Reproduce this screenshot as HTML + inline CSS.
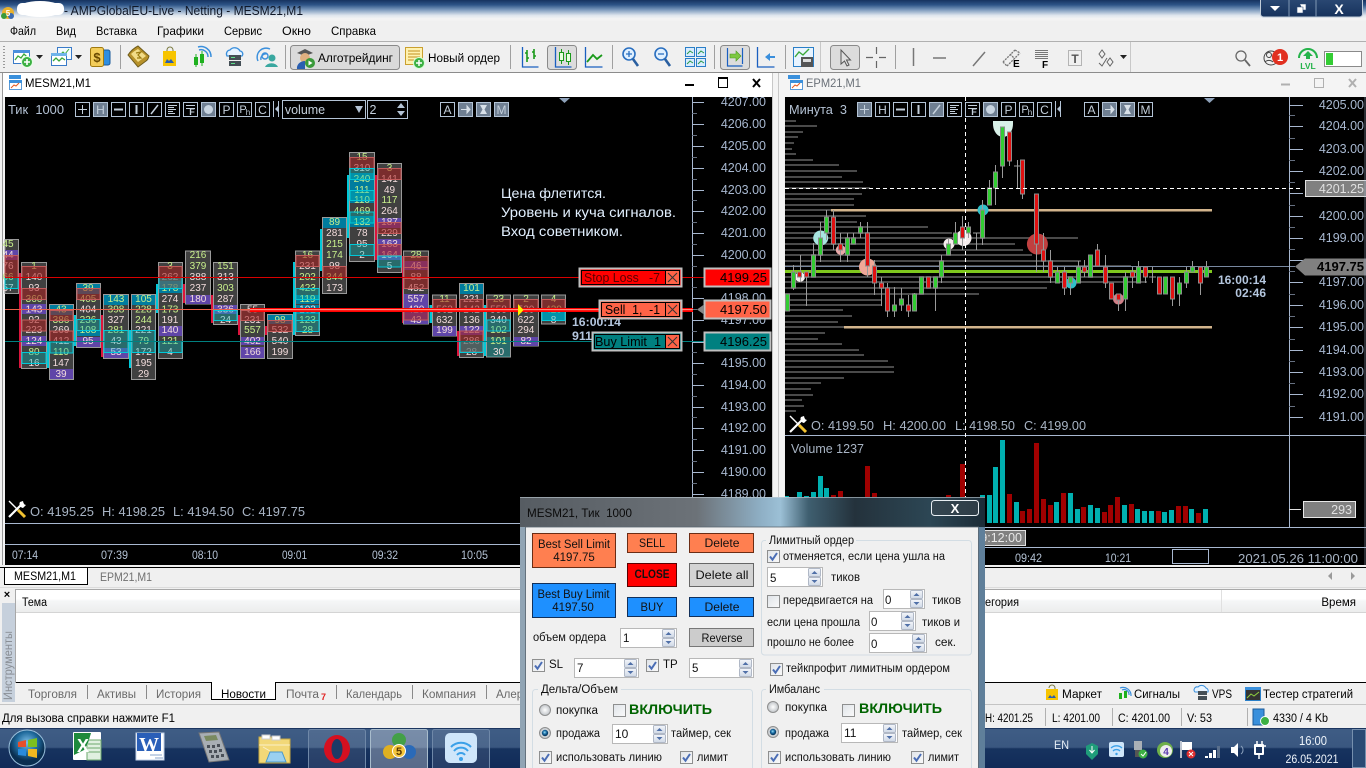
<!DOCTYPE html>
<html lang="ru"><head><meta charset="utf-8"><title>MESM21,M1</title>
<style>
html,body{margin:0;padding:0;width:1366px;height:768px;overflow:hidden;background:#f0f0f0}
svg{display:block}
text{font-family:"Liberation Sans","Noto Sans CJK SC",sans-serif;font-size:12px;fill:#000;white-space:pre}
.ax text{fill:#a8b8d0;font-size:12.5px;text-anchor:end}
.tm text{fill:#b4c2d4;font-size:12px}
.inf text{fill:#a8b4c4;font-size:13px}
.fp text{font-size:10px;fill:#f2dcdc;text-anchor:middle}
.fp text.g{fill:#c8f08c}
.fb{fill:#404040;stroke:#9a9a9a;stroke-width:1}
.tl{fill:#007c9e}.pu{fill:#5f45a8}
.rd{fill:rgba(170,30,30,.55);stroke:#c25a5a;stroke-width:1}
.cy{fill:rgba(0,190,190,.35);stroke:#00c8d8;stroke-width:1}
.bc{fill:#00c8d8}.br{fill:#dc143c}
.bt rect{fill:none;stroke:#b4c4d6}
.bt rect.on{fill:#6f7f92}
.bt text{fill:#c4d0dc;font-size:12px;text-anchor:middle}
.bl{fill:none;stroke:#c4d0dc}
.dg text{font-size:11.5px;fill:#111}
.ct{text-anchor:middle}
.ed{fill:#fff;stroke:#b8b8b8}
.grp{fill:none;stroke:#d3dde4;stroke-width:1}
.tab text{font-size:11.5px;fill:#6a6a6a}
.sep{stroke:#a0a0a0}
</style></head><body>
<svg width="1366" height="768" viewBox="0 0 1366 768" xmlns="http://www.w3.org/2000/svg">
<defs>
<linearGradient id="tg" x1="0" y1="0" x2="0" y2="1"><stop offset="0" stop-color="#16335f"/><stop offset=".22" stop-color="#2d5487"/><stop offset=".45" stop-color="#7f9cbe"/><stop offset=".7" stop-color="#dfe6ee"/><stop offset=".85" stop-color="#f4f4f4"/><stop offset="1" stop-color="#f0f0f0"/></linearGradient>
<linearGradient id="wb" x1="0" y1="0" x2="0" y2="1"><stop offset="0" stop-color="#2d4b76"/><stop offset="1" stop-color="#16325c"/></linearGradient>
<linearGradient id="tb" x1="0" y1="0" x2="0" y2="1"><stop offset="0" stop-color="#3f5d85"/><stop offset=".48" stop-color="#3a5780"/><stop offset=".52" stop-color="#17335f"/><stop offset="1" stop-color="#112b58"/></linearGradient>
<linearGradient id="hd" x1="0" y1="0" x2="0" y2="1"><stop offset="0" stop-color="#fff"/><stop offset=".4" stop-color="#fff"/><stop offset=".5" stop-color="#f5f6f7"/><stop offset="1" stop-color="#eceded"/></linearGradient>
<linearGradient id="gl" x1="0" y1="0" x2="1" y2="0"><stop offset="0" stop-color="#565c62"/><stop offset=".38" stop-color="#6c7278"/><stop offset=".52" stop-color="#8fb0c6"/><stop offset=".56" stop-color="#9cc0d6"/><stop offset=".62" stop-color="#3f5f70"/><stop offset=".72" stop-color="#24323c"/><stop offset=".88" stop-color="#2c4654"/><stop offset="1" stop-color="#1b2b36"/></linearGradient>
<linearGradient id="sg" x1="0" y1="0" x2="0" y2="1"><stop offset="0" stop-color="#f4f6fa"/><stop offset="1" stop-color="#cfd8e6"/></linearGradient>
<linearGradient id="cg" x1="0" y1="0" x2="1" y2="1"><stop offset="0" stop-color="#dfe3e8"/><stop offset="1" stop-color="#fafafa"/></linearGradient>
<radialGradient id="rg"><stop offset="0" stop-color="#fff"/><stop offset="1" stop-color="#c0c4c8"/></radialGradient>
<radialGradient id="rb" cx=".45" cy=".4"><stop offset="0" stop-color="#9ce0f4"/><stop offset=".55" stop-color="#1a6ea8"/><stop offset="1" stop-color="#0a3a60"/></radialGradient>
<radialGradient id="orb" cx=".5" cy=".35"><stop offset="0" stop-color="#7fc0e8"/><stop offset=".6" stop-color="#1f6a9c"/><stop offset="1" stop-color="#0a2e50"/></radialGradient>
<g id="sp"><rect x=".5" y=".5" width="12" height="8" rx="1" fill="url(#sg)" stroke="#b0b8c6"/><path d="M3.5 6l3-3 3 3z" fill="#5070a8"/><rect x=".5" y="9.5" width="12" height="8" rx="1" fill="url(#sg)" stroke="#b0b8c6"/><path d="M3.5 12l3 3 3-3z" fill="#5070a8"/></g>
<g id="ck"><rect x=".5" y=".5" width="12" height="12" fill="url(#cg)" stroke="#8e8f8f"/><path d="M3 6.5l2.5 3.2L10 3" fill="none" stroke="#4a6db5" stroke-width="2"/></g>
<g id="cu"><rect x=".5" y=".5" width="12" height="12" fill="url(#cg)" stroke="#8e8f8f"/></g>
<g id="ru"><circle r="5.5" fill="url(#rg)" stroke="#8e8f8f"/></g>
<g id="rc"><circle r="5.5" fill="url(#rg)" stroke="#8e8f8f"/><circle r="3.2" fill="url(#rb)"/></g>
<g id="tool"><path d="M1 1l9 9" stroke="#fff" stroke-width="1.4"/><path d="M10 10l7 7" stroke="#f2c230" stroke-width="3"/><path d="M1 17L13 5" stroke="#fff" stroke-width="2.200"/><path d="M12 2a4 4 0 0 0 3 6l3-3-1.500-.5-1-1.500-.5-2z" fill="#fff"/></g>
</defs>

<!-- title bar -->
<rect width="1366" height="22" fill="url(#tg)"/>
<ellipse cx="40" cy="9" rx="23" ry="8" fill="#fff"/>
<rect x="17" y="3" width="47" height="12" rx="5" fill="#fff"/>
<circle cx="8" cy="13" r="6" fill="#e9b12c"/><circle cx="4" cy="16" r="3" fill="#3a9a3a"/><circle cx="11" cy="16" r="3" fill="#3a6ab0"/><text x="8" y="16" class="ct" style="font-size:8px;font-weight:bold;fill:#fff">5</text>
<text x="64" y="15" lengthAdjust="spacingAndGlyphs" textLength="239" style="font-size:13px;fill:#101828">- AMPGlobalEU-Live - Netting - MESM21,M1</text>
<rect x="1260.500" y="-3" width="102" height="20" rx="3" fill="url(#wb)" stroke="#c0ccd8"/>
<path d="M1289 0v17M1316 0v17" stroke="#8098b4"/>
<path d="M1270 6h10l-5 5z" fill="#fff"/>
<path d="M1297 7h6v6h-6zM1300 4h6v6h-3" fill="#fff" stroke="#2d4b76" stroke-width=".6"/>
<text x="1339" y="14" class="ct" style="fill:#fff;font-size:14px;font-weight:bold">X</text>

<!-- menu & toolbar -->
<rect y="22" width="1366" height="50" fill="#f0f0f0"/>
<path d="M0 41.500h1366" stroke="#b0b0b0"/>
<path d="M0 72.500h1366" stroke="#8c8c8c"/>
<g>
<text x="10" y="35" lengthAdjust="spacingAndGlyphs" textLength="26">Файл</text><text x="56" y="35" lengthAdjust="spacingAndGlyphs" textLength="20">Вид</text><text x="96" y="35" lengthAdjust="spacingAndGlyphs" textLength="41">Вставка</text><text x="157" y="35" lengthAdjust="spacingAndGlyphs" textLength="47">Графики</text><text x="224" y="35" lengthAdjust="spacingAndGlyphs" textLength="38">Сервис</text><text x="282" y="35" lengthAdjust="spacingAndGlyphs" textLength="29">Окно</text><text x="331" y="35" lengthAdjust="spacingAndGlyphs" textLength="45">Справка</text>
</g>
<path d="M4 46v24" stroke="#9a9a9a" stroke-dasharray="1 2" stroke-width="2"/>
<path d="M120.500 45v24M285.500 45v24M510.500 45v24M612.500 45v24M714.500 45v24M785.500 45v24M895.500 45v24" class="sep"/>
<path d="M820.500 42v30M1130.500 42v30" stroke="#c8c8c8"/>
<!-- new chart -->
<rect x="13.500" y="50.500" width="16" height="13" fill="#fff" stroke="#3a7bc8"/><rect x="13" y="50" width="17" height="3" fill="#4a90dc"/><path d="M15 60l3-4 3 2 3-4 3 3" fill="none" stroke="#3aa83a" stroke-width="1.300"/><circle cx="27" cy="62" r="5.500" fill="#3cb043" stroke="#e8ffe8"/><path d="M24 62h6M27 59v6" stroke="#fff" stroke-width="1.600"/>
<path d="M36 55h7l-3.500 4z" fill="#222"/>
<rect x="57.500" y="47.500" width="14" height="12" fill="#f4fbff" stroke="#3a7bc8"/><path d="M60 55l3-3 2 2 4-5" stroke="#3aa83a" fill="none"/><rect x="51.500" y="53.500" width="15" height="12" fill="#fff" stroke="#3a7bc8"/><rect x="51" y="53" width="16" height="3" fill="#6fb4ea"/><path d="M53 61l3-3 3 3 3-3 3 2" fill="none" stroke="#3aa83a" stroke-width="1.300"/>
<path d="M75 55h7l-3.500 4z" fill="#222"/>
<rect x="97" y="50" width="13" height="15" rx="2" fill="#2f8ee0" stroke="#1a5a9a"/><rect x="90.500" y="47.500" width="13" height="19" rx="2" fill="#f3cd5a" stroke="#a07a10"/><text x="97" y="62" class="ct" style="font-size:13px;fill:#6a4a00;font-weight:bold">$</text>
<!-- book -->
<path d="M128 55q4-6 10-9l11 10q-1 4-3 5l-8 6z" fill="#b8922a" stroke="#6f5c1c"/><path d="M131 54q3-3 7-5l8 7-8 6z" fill="#f2dc88"/><path d="M136 53l5-1-3 3 3 3-4 0" stroke="#9a7a10" fill="none" stroke-width="1.200"/>
<!-- bag -->
<path d="M167 52v-2a3 3 0 0 1 6 0v2" fill="none" stroke="#7a7a40"/><rect x="163" y="51" width="13" height="15" fill="#f7c400"/><path d="M165 63l2-4 2 2 2-2 3 4z" fill="#2a5fb0"/>
<!-- signals -->
<rect x="194" y="57" width="4" height="8" fill="#1fb01f"/><rect x="200" y="54" width="4" height="9" fill="#1fb01f"/><path d="M196 54v13M202 51v15" stroke="#1fb01f"/><path d="M199 50a7 7 0 0 1 9 7M198 47a10 10 0 0 1 13 10" fill="none" stroke="#3a8fdc" stroke-width="1.500"/>
<!-- vps -->
<path d="M227 56a4 4 0 0 1 3-6 6 6 0 0 1 10 1 3 3 0 0 1 2 5z" fill="#e8f4ff" stroke="#3a8fdc" stroke-width="1.300"/><rect x="229" y="55" width="12" height="5" fill="#444e55"/><rect x="229" y="61" width="12" height="5" fill="#444e55"/><path d="M231 57.500h4M231 63.500h4" stroke="#5fe08a"/>
<!-- radar person -->
<circle cx="265" cy="56" r="3" fill="none" stroke="#3a8fdc" stroke-width="1.400"/><path d="M258 61a9 9 0 0 1 12-12M261 60a5 5 0 0 1 6-6" fill="none" stroke="#3a8fdc" stroke-width="1.400"/><circle cx="272" cy="58" r="3.500" fill="#3aa8a0"/><path d="M265 67a7 6 0 0 1 13 0z" fill="#3aa8a0"/>
<!-- algo -->
<rect x="290.500" y="45.500" width="109" height="24" rx="3" fill="#dadada" stroke="#8a8a8a"/>
<path d="M297 53l8-4 8 4-8 3z" fill="#555"/><circle cx="305" cy="58" r="5" fill="#e0b080"/><path d="M297 69a8 7 0 0 1 8-8l0 8z" fill="#2a5fb0"/><circle cx="310" cy="63" r="5" fill="#3a9a3a"/><path d="M308.500 60.500l4 2.500-4 2.500z" fill="#fff"/>
<text x="318" y="62" lengthAdjust="spacingAndGlyphs" textLength="75" style="font-size:11.500px">Алготрейдинг</text>
<!-- new order -->
<rect x="405.500" y="47.500" width="17" height="17" fill="#fff2b0" stroke="#caa030"/><path d="M408 51h12M408 54h12M408 57h12M408 60h7" stroke="#c09020"/><circle cx="419" cy="63" r="5.500" fill="#3cb043" stroke="#d8ffd8"/><path d="M416 63h6M419 60v6" stroke="#fff" stroke-width="1.500"/>
<text x="428" y="62" lengthAdjust="spacingAndGlyphs" textLength="72" style="font-size:11.500px">Новый ордер</text>
<!-- chart types -->
<path d="M522.500 47v20h16" fill="none" stroke="#1a5fc0" stroke-width="1.300"/><path d="M527 50v12M525 53h2M527 58h2M534 49v10M532 52h2M534 56h2" stroke="#1a9a1a" stroke-width="1.600" fill="none"/>
<rect x="547.500" y="45.500" width="29" height="24" rx="3" fill="#dcdcdc" stroke="#8a8a8a"/><path d="M555.500 47v20h16" fill="none" stroke="#1a5fc0" stroke-width="1.300"/><rect x="559.500" y="52.500" width="4" height="8" fill="#e8ffe0" stroke="#1a9a1a"/><rect x="566.500" y="53.500" width="4" height="8" fill="#e8ffe0" stroke="#1a9a1a"/><path d="M561.500 49v3M561.500 61v3M568.500 50v3M568.500 62v3" stroke="#1a9a1a"/>
<path d="M585.500 47v20h17" fill="none" stroke="#1a5fc0" stroke-width="1.300"/><path d="M587 62l6-7 4 4 5-4" fill="none" stroke="#1a9a1a" stroke-width="1.800"/>
<!-- zoom -->
<circle cx="629" cy="54" r="6" fill="#e0f0ff" stroke="#2a6fc0" stroke-width="1.600"/><path d="M626 54h6M629 51v6" stroke="#2a6fc0" stroke-width="1.300"/><path d="M633 59l5 7" stroke="#2a5fa0" stroke-width="2.600"/>
<circle cx="661" cy="54" r="6" fill="#e0f0ff" stroke="#2a6fc0" stroke-width="1.600"/><path d="M658 54h6" stroke="#2a6fc0" stroke-width="1.300"/><path d="M665 59l5 7" stroke="#2a5fa0" stroke-width="2.600"/>
<!-- tile -->
<g fill="#d8ecff" stroke="#2a7fc8"><rect x="685.500" y="47.500" width="9" height="9"/><rect x="696.500" y="47.500" width="9" height="9"/><rect x="685.500" y="58.500" width="9" height="8"/><rect x="696.500" y="58.500" width="9" height="8"/></g><path d="M687 54l3-3 3 2M698 54l3-3 3 2M687 64l3-3 3 2M698 64l3-3 3 2" fill="none" stroke="#2a9a4a"/>
<!-- shift / autoscroll -->
<rect x="720.500" y="45.500" width="29" height="24" rx="3" fill="#dcdcdc" stroke="#8a8a8a"/><path d="M727.500 48v18h15M742.500 48v16" fill="none" stroke="#1a5fc0" stroke-width="1.200"/><path d="M730 54h6v-3l5 5-5 5v-3h-6z" fill="#7cc840" stroke="#4a9a20" stroke-width=".6"/>
<path d="M757.500 47v20h17" fill="none" stroke="#1a5fc0" stroke-width="1.300"/><path d="M775 56h-5v-3l-5 4 5 4v-3h5z" fill="#3a8fdc"/>
<!-- template -->
<rect x="793.500" y="47.500" width="20" height="19" fill="#e8f4ff" stroke="#2a7fc8"/><path d="M795 57l4-5 4 3 6-6" fill="none" stroke="#3aa83a" stroke-width="1.400"/><rect x="801" y="57" width="12" height="10" fill="#555"/><rect x="803" y="59" width="8" height="3" fill="#ddd"/>
<!-- cursor -->
<rect x="830.500" y="45.500" width="29" height="24" rx="3" fill="#dcdcdc" stroke="#8a8a8a"/><path d="M841 50v14l3.500-3 2.500 5 2-1-2.500-5h4z" fill="#e0e0e0" stroke="#555"/>
<path d="M866 57.500h7M879 57.500h7M876.500 47v7M876.500 61v7" stroke="#666" stroke-width="1.200"/>
<path d="M913.500 48v18" stroke="#777" stroke-width="1.500"/><path d="M933 58h13" stroke="#777" stroke-width="1.500"/><path d="M973 66l12-14" stroke="#777" stroke-width="1.500"/>
<path d="M1003 62l12-12M1007 66l13-13M1003 62l4 4M1010 54l5 5M1015 50l5 3" stroke="#777" stroke-width="1.300" stroke-dasharray="2 1" fill="none"/>
<text x="1013" y="67" style="font-size:10px;font-weight:bold">E</text>
<g fill="#777"><path d="M1035 50h13v1h-13zM1035 52h13v1h-13zM1035 54h13v1h-13zM1035 56h13v1h-13zM1035 58h13v1h-13z"/></g><text x="1042" y="68" style="font-size:10px;font-weight:bold">F</text>
<rect x="1068.500" y="50.500" width="13" height="15" fill="none" stroke="#777" stroke-dasharray="1 1"/><text x="1075" y="63" class="ct" style="font-size:12px;fill:#555;font-weight:bold">T</text>
<path d="M1102 50l-3 4 3 4 3-4zM1110 58l-3 4 3 4 3-4z" fill="none" stroke="#666"/><path d="M1099 63l3 3 5-8" stroke="#666" fill="none"/>
<path d="M1120 55h7l-3.500 4z" fill="#222"/>
<circle cx="1241" cy="56" r="5" fill="none" stroke="#666" stroke-width="1.300"/><path d="M1245 60l5 6" stroke="#666" stroke-width="1.800"/>
<circle cx="1271" cy="58" r="7" fill="none" stroke="#444"/><circle cx="1269" cy="55" r="2.500" fill="none" stroke="#444"/><path d="M1265 62a5 4 0 0 1 8 0" stroke="#444" fill="none"/><circle cx="1280" cy="57" r="8" fill="#e13020"/><text x="1280" y="61" class="ct" style="font-size:11px;font-weight:bold;fill:#fff">1</text>
<path d="M1299 58a9 9 0 0 1 18 0" fill="none" stroke="#25b34a" stroke-width="2"/><path d="M1308 51l5 5h-3v3h-4v-3h-3z" fill="#25b34a"/><text x="1308" y="69" class="ct" style="font-size:8.500px;font-weight:bold;fill:#25b34a">LVL</text>
<rect x="1324.500" y="51.500" width="37" height="15" fill="#fff" stroke="#8a8a8a"/><rect x="1326" y="53" width="7" height="12" fill="#33cc33"/>

<!-- left window -->
<rect y="73" width="784" height="495" fill="#f4f4f4"/>
<rect y="73" x="3" width="769" height="24" fill="#fff"/>
<path d="M2.500 73v492" stroke="#9a9a9a"/>
<path d="M772.500 73v492M778.500 73v492" stroke="#c8c8c8"/>
<rect x="9" y="75" width="12" height="4" fill="#3a90dc"/><rect x="9.500" y="80.500" width="12" height="9" fill="#fff" stroke="#5a9ad8"/><rect x="9" y="80" width="13" height="3" fill="#3a90dc"/><path d="M11 88l3-3 2 1 3-3" stroke="#e55a20" fill="none"/>
<text x="25" y="87" lengthAdjust="spacingAndGlyphs" textLength="66" style="font-size:12px">MESM21,M1</text>
<path d="M685 85h9" stroke="#000" stroke-width="2"/><rect x="718.500" y="78.500" width="9" height="9" fill="none" stroke="#000"/><path d="M718 78h10" stroke="#000" stroke-width="2"/><path d="M753 79l7 8M760 79l-7 8" stroke="#000" stroke-width="2"/>
<rect x="5" y="97" width="767" height="468" fill="#000"/>
<!-- left chart toolbar -->
<g class="tm"><text x="8" y="114" lengthAdjust="spacingAndGlyphs" textLength="56" style="font-size:12.500px">Тик  1000</text></g>
<g class="bt">
<rect x="75.500" y="102.500" width="14" height="14"/><path class="bl" d="M78 109.500h9M82.500 105v9"/>
<rect class="on" x="93.500" y="102.500" width="14" height="14"/><text x="100.500" y="114">H</text>
<rect x="111.500" y="102.500" width="14" height="14"/><path d="M114 109.500h9" class="bl" stroke-width="2"/>
<rect x="129.500" y="102.500" width="14" height="14"/><path d="M136.500 105v9" class="bl" stroke-width="2"/>
<rect x="147.500" y="102.500" width="14" height="14"/><path d="M151 114l7-9" class="bl" stroke-width="1.500"/>
<rect x="165.500" y="102.500" width="14" height="14"/><path d="M168 105.500h9M168 107.500h6M168 109.500h8M168 111.500h5M168 113.500h7" class="bl"/>
<rect x="183.500" y="102.500" width="14" height="14"/><path d="M186 105.500h9M186 108.500h9" class="bl"/><text x="192" y="115" style="font-size:9px;font-weight:bold">F</text>
<rect class="on" x="201.500" y="102.500" width="14" height="14"/><circle cx="208.500" cy="109.500" r="4.500" fill="#c8d4e0"/>
<rect x="219.500" y="102.500" width="14" height="14"/><text x="226.500" y="114">P</text>
<rect x="237.500" y="102.500" width="14" height="14"/><text x="243" y="113" style="font-size:11px">P</text><text x="248" y="115" style="font-size:8px">h</text>
<rect x="255.500" y="102.500" width="14" height="14"/><text x="262.500" y="114">C</text>
<path d="M273.500 101v16M278.500 101v16" stroke="#b4c4d6"/><path d="M275 109l3-3v6z" fill="#b4c4d6"/>
<rect x="282.500" y="100.500" width="83" height="18"/><text x="305" y="114" style="font-size:12.500px">volume</text><path d="M355 106h8l-4 7z" fill="#b4c4d6"/>
<rect x="367.500" y="100.500" width="40" height="18"/><text x="373" y="114" style="font-size:12.500px">2</text><path d="M397 108h8l-4-5zM397 111h8l-4 5z" fill="#b4c4d6"/>
<rect x="440.500" y="102.500" width="14" height="14"/><text x="447.500" y="114">A</text>
<rect class="on" x="458.500" y="102.500" width="14" height="14"/><path d="M461 109.500h6M467 106l3 3.500-3 3.500z" stroke="#d8e0e8" fill="#d8e0e8"/>
<rect class="on" x="476.500" y="102.500" width="14" height="14"/><path d="M480 105h7l-2.500 4.500 2.500 4.500h-7l2.500-4.500z" fill="#d8e0e8"/>
<rect class="on" x="494.500" y="102.500" width="14" height="14"/><text x="501.500" y="114">M</text>
</g>
<path d="M559 98h11l-5.500 5z" fill="#8fa2ba"/>

<!-- left footprint -->
<g class="fp">
<rect class="bc" x="47" y="342" width="2.500" height="26"/><rect class="br" x="19" y="273" width="2.500" height="95"/><rect class="bc" x="74" y="315" width="2.500" height="31"/><rect class="br" x="101" y="315" width="2.500" height="42"/><rect class="bc" x="129" y="330" width="2.500" height="38"/><rect class="bc" x="156" y="284" width="2.500" height="29"/><rect class="br" x="183" y="284" width="2.500" height="19"/><rect class="br" x="211" y="295" width="2.500" height="28"/><rect class="br" x="238" y="315" width="2.500" height="20"/><rect class="br" x="265" y="326" width="2.500" height="9"/><rect class="bc" x="293" y="262" width="2.500" height="73"/><rect class="bc" x="320" y="229" width="2.500" height="42"/><rect class="bc" x="347" y="175" width="2.500" height="63"/><rect class="br" x="375" y="175" width="2.500" height="85"/><rect class="br" x="402" y="256" width="2.500" height="67"/><rect class="bc" x="429.500" y="305" width="2.500" height="18"/><rect class="br" x="457" y="331" width="2.500" height="25"/><rect class="bc" x="484" y="305" width="2.500" height="51"/>

<!-- c0 -->
<rect class="fb" x="5" y="239.500" width="13.500" height="54"/><rect class="pu" x="5" y="250" width="13" height="10"/>
<g transform="translate(8 0)"><text class="g" y="247">45</text><text y="258">44</text><text y="269">76</text><text class="g" y="280">66</text><text y="291">57</text></g>
<rect class="rd" x="5" y="255.500" width="13" height="22"/><rect class="cy" x="5" y="277.500" width="13" height="11"/>
<!-- c1 -->
<rect class="fb" x="21.500" y="262.500" width="25" height="106"/><rect class="pu" x="22" y="304" width="24" height="10"/><rect class="pu" x="22" y="336" width="24" height="10"/>
<g transform="translate(34 0)"><text class="g" y="269">1</text><text y="280">140</text><text y="291">93</text><text class="g" y="302">360</text><text y="312.500">143</text><text y="323">92</text><text y="333">223</text><text y="344">124</text><text class="g" y="355">80</text><text y="366">16</text></g>
<rect class="rd" x="22" y="266.500" width="24" height="11"/><rect class="rd" x="22" y="288.500" width="24" height="11"/><rect class="rd" x="22" y="320" width="24" height="11"/><rect class="cy" x="22" y="352.500" width="24" height="11"/>
<!-- c2 -->
<rect class="fb" x="49.500" y="304.500" width="24" height="75"/><rect class="tl" x="50" y="305" width="23" height="10"/><rect class="pu" x="50" y="369" width="23" height="10"/>
<g transform="translate(61 0)"><text class="g" y="312.500">43</text><text class="g" y="323">386</text><text y="333">269</text><text y="344">412</text><text class="g" y="355">110</text><text y="366">147</text><text y="377">39</text></g>
<rect class="rd" x="50" y="310.500" width="23" height="10"/><rect class="rd" x="50" y="331" width="23" height="11"/><rect class="cy" x="50" y="342" width="23" height="11"/>
<!-- c3 -->
<rect class="fb" x="76.500" y="283.500" width="24" height="64"/><rect class="tl" x="77" y="284" width="23" height="10"/><rect class="tl" x="77" y="330" width="23" height="6"/><rect class="pu" x="77" y="337" width="23" height="10"/>
<g transform="translate(88 0)"><text class="g" y="291">39</text><text class="g" y="302">405</text><text y="312.500">404</text><text class="g" y="323">236</text><text class="g" y="333">108</text><text y="344">95</text></g>
<rect class="rd" x="77" y="288.500" width="23" height="11"/><rect class="cy" x="77" y="319.500" width="23" height="11"/>
<!-- c4 -->
<rect class="fb" x="103.500" y="294.500" width="25" height="64"/><rect class="tl" x="104" y="295" width="24" height="10"/><rect class="pu" x="104" y="348" width="24" height="10"/>
<g transform="translate(116 0)"><text class="g" y="302">143</text><text class="g" y="312.500">398</text><text y="323">327</text><text class="g" y="333">281</text><text y="344">43</text><text y="355">53</text></g>
<rect class="cy" x="104" y="330.500" width="24" height="22"/>
<!-- c5 -->
<rect class="fb" x="131.500" y="294.500" width="24" height="85"/><rect class="tl" x="132" y="295" width="23" height="10"/>
<g transform="translate(143.500 0)"><text class="g" y="302">105</text><text class="g" y="312.500">228</text><text class="g" y="323">244</text><text y="333">221</text><text class="g" y="344">79</text><text y="355">172</text><text y="366">195</text><text y="377">29</text></g>
<rect class="cy" x="132" y="330.500" width="23" height="22"/>
<!-- c6 -->
<rect class="fb" x="158.500" y="262.500" width="24" height="96"/><rect class="tl" x="159" y="281" width="23" height="12"/><rect class="pu" x="159" y="326" width="23" height="10"/>
<g transform="translate(170 0)"><text class="g" y="269">3</text><text y="280">262</text><text class="g" y="291">178</text><text y="302">274</text><text class="g" y="312.500">173</text><text y="323">191</text><text y="333">140</text><text class="g" y="344">121</text><text y="355">4</text></g>
<rect class="rd" x="159" y="266.500" width="23" height="22"/><rect class="cy" x="159" y="277.500" width="23" height="11"/><rect class="cy" x="159" y="341.500" width="23" height="11"/>
<!-- c7 -->
<rect class="fb" x="185.500" y="251" width="25" height="53"/><rect class="pu" x="186" y="295" width="24" height="9"/>
<g transform="translate(198 0)"><text class="g" y="258">216</text><text class="g" y="269">379</text><text y="280">388</text><text y="291">237</text><text y="302">180</text></g>
<!-- c8 -->
<rect class="fb" x="213.500" y="262.500" width="24" height="62"/><rect class="pu" x="214" y="305" width="23" height="9"/>
<g transform="translate(225.500 0)"><text class="g" y="269">151</text><text y="280">313</text><text class="g" y="291">303</text><text y="302">287</text><text y="312.500">336</text><text y="323">24</text></g>
<rect class="cy" x="214" y="310.500" width="23" height="10"/>
<!-- c9 -->
<rect class="fb" x="240.500" y="304.500" width="24" height="54"/><rect class="pu" x="241" y="337" width="23" height="8"/><rect class="pu" x="241" y="347" width="23" height="11"/>
<g transform="translate(252.500 0)"><text y="312.500">55</text><text y="323">231</text><text class="g" y="333">557</text><text y="344">402</text><text y="355">166</text></g>
<rect class="rd" x="241" y="310.500" width="23" height="10"/>
<!-- c10 -->
<rect class="fb" x="267.500" y="314.500" width="25" height="44"/><rect class="tl" x="268" y="315" width="24" height="9"/>
<g transform="translate(280 0)"><text class="g" y="323">98</text><text y="333">532</text><text y="344">540</text><text y="355">199</text></g>
<rect class="rd" x="268" y="320.500" width="24" height="11"/>
<!-- c11 -->
<rect class="fb" x="295.500" y="251" width="24" height="84.500"/><rect class="tl" x="296" y="295" width="23" height="9"/><rect class="tl" x="296" y="305" width="23" height="9"/>
<g transform="translate(307.500 0)"><text class="g" y="258">16</text><text y="269">231</text><text class="g" y="280">202</text><text class="g" y="291">423</text><text class="g" y="302">119</text><text y="312.500">102</text><text class="g" y="323">123</text><text class="g" y="333">28</text></g>
<rect class="rd" x="296" y="255.500" width="23" height="11"/><rect class="cy" x="296" y="288.500" width="23" height="11"/><rect class="cy" x="296" y="309.500" width="23" height="22"/><path d="M296 320.500h23" stroke="#00c8d8"/>
<!-- c12 -->
<rect class="fb" x="322.500" y="217.500" width="24" height="76"/><rect class="tl" x="323" y="218" width="23" height="10"/>
<g transform="translate(334.500 0)"><text class="g" y="225">89</text><text y="236">281</text><text class="g" y="247">215</text><text class="g" y="258">174</text><text y="269">98</text><text class="g" y="280">344</text><text y="291">173</text></g>
<rect class="rd" x="323" y="266.500" width="23" height="11"/>
<!-- c13 -->
<rect class="fb" x="349.500" y="152.500" width="25" height="109"/><rect class="tl" x="350" y="173" width="24" height="30"/><rect class="tl" x="350" y="216" width="24" height="11"/>
<g transform="translate(362 0)"><text class="g" y="160">15</text><text y="171">310</text><text class="g" y="182">240</text><text class="g" y="193">111</text><text class="g" y="203">110</text><text class="g" y="214">469</text><text class="g" y="225">132</text><text y="236">78</text><text y="247">95</text><text y="258">2</text></g>
<rect class="rd" x="350" y="157.500" width="24" height="11"/><rect class="cy" x="350" y="168.500" width="24" height="11"/><rect class="cy" x="350" y="190.500" width="24" height="10"/><rect class="cy" x="350" y="212" width="24" height="11"/><rect class="cy" x="350" y="244.500" width="24" height="11"/>
<!-- c14 -->
<rect class="fb" x="377.500" y="163.500" width="24" height="109"/><rect class="pu" x="378" y="218" width="23" height="10"/><rect class="pu" x="378" y="239" width="23" height="21"/>
<g transform="translate(389.500 0)"><text class="g" y="171">3</text><text y="182">141</text><text y="193">49</text><text class="g" y="203">117</text><text y="214">264</text><text y="225">187</text><text y="236">229</text><text y="247">163</text><text y="258">164</text><text y="269">5</text></g>
<rect class="rd" x="378" y="168.500" width="23" height="11"/><rect class="rd" x="378" y="222.500" width="23" height="11"/><rect class="rd" x="378" y="244.500" width="23" height="11"/><rect class="cy" x="378" y="256" width="23" height="11"/>
<!-- c15 -->
<rect class="fb" x="403.500" y="251" width="25" height="73"/><rect class="pu" x="404" y="261" width="24" height="9"/><rect class="pu" x="404" y="294" width="24" height="30"/>
<g transform="translate(416 0)"><text class="g" y="258">28</text><text y="269">46</text><text y="280">88</text><text y="291">452</text><text y="302">557</text><text y="312.500">420</text><text y="323">43</text></g>
<rect class="rd" x="404" y="256.500" width="24" height="32"/><path d="M404 267.500h24M404 278.500h24" stroke="#c25a5a"/><rect class="rd" x="404" y="310" width="24" height="10"/>
<!-- c16 -->
<rect class="fb" x="432.500" y="295" width="24" height="41"/><rect class="pu" x="433" y="326" width="23" height="10"/>
<g transform="translate(444.500 0)"><text class="g" y="302">11</text><text y="312.500">562</text><text y="323">632</text><text y="333">199</text></g>
<rect class="rd" x="433" y="299.500" width="23" height="11"/>
<!-- c17 -->
<rect class="fb" x="459.500" y="283.500" width="24" height="74"/><rect class="tl" x="460" y="284" width="23" height="10"/><rect class="pu" x="460" y="326" width="23" height="9"/>
<g transform="translate(471.500 0)"><text class="g" y="291">101</text><text y="302">221</text><text y="312.500">142</text><text y="323">136</text><text y="333">122</text><text y="344">286</text><text y="355">28</text></g>
<rect class="rd" x="460" y="299.500" width="23" height="11"/><rect class="rd" x="460" y="331" width="23" height="21"/><rect class="cy" x="460" y="341.500" width="23" height="11"/>
<!-- c18 -->
<rect class="fb" x="486.500" y="295" width="24" height="62"/><rect class="cy" x="487" y="337" width="23" height="20" style="stroke:none"/>
<g transform="translate(498.500 0)"><text class="g" y="302">23</text><text y="312.500">558</text><text y="323">340</text><text class="g" y="333">102</text><text class="g" y="344">101</text><text y="355">30</text></g>
<rect class="rd" x="487" y="299.500" width="23" height="11"/><rect class="cy" x="487" y="320" width="23" height="11"/>
<!-- c19 -->
<rect class="fb" x="513.500" y="295" width="25" height="51"/><rect class="pu" x="514" y="337" width="24" height="9"/>
<g transform="translate(526 0)"><text class="g" y="302">2</text><text y="312.500">530</text><text y="323">622</text><text y="333">294</text><text y="344">82</text></g>
<rect class="rd" x="514" y="299.500" width="24" height="11"/>
<!-- c20 -->
<rect class="fb" x="541.500" y="295" width="24" height="29"/><rect class="tl" x="542" y="311" width="23" height="9"/>
<g transform="translate(553.500 0)"><text class="g" y="302">4</text><text class="g" y="312.500">420</text><text y="323">8</text></g>
<rect class="rd" x="542" y="299.500" width="23" height="11"/><rect class="cy" x="542" y="310.500" width="23" height="10"/>
</g>

<!-- left axis -->
<path d="M692.500 97V523M692 102.500h12M692 124.500h12M692 146.500h12M692 168.500h12M692 190.500h12M692 211.500h12M692 233.500h12M692 255.500h12M692 277.500h12M692 298.500h12M692 320.500h12M692 342.500h12M692 363.500h12M692 385.500h12M692 407.500h12M692 428.500h12M692 450.500h12M692 472.500h12M692 494.500h12M692 516.500h12" stroke="#a8b8d0" fill="none"/>
<path d="M692 113.500h5M692 135.500h5M692 157.500h5M692 179.500h5M692 200.500h5M692 222.500h5M692 244.500h5M692 266.500h5M692 287.500h5M692 309.500h5M692 331.500h5M692 352.500h5M692 374.500h5M692 396.500h5M692 417.500h5M692 439.500h5M692 461.500h5M692 483.500h5M692 505.500h5" stroke="#667080" fill="none"/>
<g class="ax"><text x="766" y="106">4207.00</text><text x="766" y="128">4206.00</text><text x="766" y="150">4205.00</text><text x="766" y="172">4204.00</text><text x="766" y="194">4203.00</text><text x="766" y="215">4202.00</text><text x="766" y="237">4201.00</text><text x="766" y="259">4200.00</text><text x="766" y="302">4198.00</text><text x="766" y="324">4197.00</text><text x="766" y="367">4195.00</text><text x="766" y="389">4194.00</text><text x="766" y="411">4193.00</text><text x="766" y="432">4192.00</text><text x="766" y="454">4191.00</text><text x="766" y="476">4190.00</text><text x="766" y="498">4189.00</text></g>
<path d="M5 523.500h767M5 544.500h767" stroke="#a8b8d0"/>
<g class="tm"><text x="12" y="559" lengthAdjust="spacingAndGlyphs" textLength="26">07:14</text><text x="101" y="559" lengthAdjust="spacingAndGlyphs" textLength="27">07:39</text><text x="192" y="559" lengthAdjust="spacingAndGlyphs" textLength="26">08:10</text><text x="282" y="559" lengthAdjust="spacingAndGlyphs" textLength="25">09:01</text><text x="372" y="559" lengthAdjust="spacingAndGlyphs" textLength="26">09:32</text><text x="461" y="559" lengthAdjust="spacingAndGlyphs" textLength="27">10:05</text></g>
<use href="#tool" x="8" y="500"/>
<g class="inf"><text x="30" y="516" lengthAdjust="spacingAndGlyphs" textLength="64">O: 4195.25</text><text x="102" y="516" lengthAdjust="spacingAndGlyphs" textLength="63">H: 4198.25</text><text x="173" y="516" lengthAdjust="spacingAndGlyphs" textLength="61">L: 4194.50</text><text x="242" y="516" lengthAdjust="spacingAndGlyphs" textLength="63">C: 4197.75</text></g>

<!-- order lines -->
<path d="M5 277.500h700" stroke="#d80000"/><path d="M5 309.500h245" stroke="#e8604a"/><path d="M5 341.500h700" stroke="#008080"/>
<rect x="250" y="308" width="443" height="4" fill="#ff0000"/><rect x="250" y="309" width="443" height="1.200" fill="#ff8a7a"/>
<path d="M518 304l5.500 6-5.500 6z" fill="#ffee00"/>
<text x="572" y="326" lengthAdjust="spacingAndGlyphs" textLength="49" style="font-size:12px;fill:#b4c6de;font-weight:bold">16:00:14</text><text x="572" y="340" lengthAdjust="spacingAndGlyphs" textLength="20" style="font-size:12px;fill:#b4c6de;font-weight:bold">911</text>
<text x="501" y="198" lengthAdjust="spacingAndGlyphs" textLength="105" style="font-size:13.500px;fill:#e2f0ff">Цена флетится.</text><text x="501" y="217" lengthAdjust="spacingAndGlyphs" textLength="175" style="font-size:13.500px;fill:#e2f0ff">Уровень и куча сигналов.</text><text x="501" y="236" lengthAdjust="spacingAndGlyphs" textLength="122" style="font-size:13.500px;fill:#e2f0ff">Вход советником.</text>
<!-- order tags -->
<rect x="579.500" y="268.500" width="102" height="18" fill="#ff0000" stroke="#c0c0c0" stroke-width="2"/><rect x="581.500" y="270.500" width="98" height="14" fill="none" stroke="#000"/>
<text x="584" y="282" lengthAdjust="spacingAndGlyphs" textLength="76" style="font-size:12.500px;fill:#5a0000">Stop Loss   -7</text>
<rect x="665.500" y="270.500" width="14" height="14" fill="#ff6347" stroke="#000"/><path d="M668 273l9 9M677 273l-9 9" stroke="#333"/>
<rect x="599.500" y="300.500" width="82" height="18" fill="#ff6347" stroke="#c0c0c0" stroke-width="2"/><rect x="601.500" y="302.500" width="78" height="14" fill="none" stroke="#000"/>
<text x="605" y="314" lengthAdjust="spacingAndGlyphs" textLength="55" style="font-size:12.500px">Sell  1,  -1</text>
<rect x="665.500" y="302.500" width="14" height="14" fill="#ff6347" stroke="#000"/><path d="M668 305l9 9M677 305l-9 9" stroke="#333"/>
<rect x="592.500" y="332.500" width="89" height="18" fill="#008080" stroke="#c0c0c0" stroke-width="2"/><rect x="594.500" y="334.500" width="85" height="14" fill="none" stroke="#000"/>
<text x="595" y="346" lengthAdjust="spacingAndGlyphs" textLength="66" style="font-size:12.500px">Buy Limit  1</text>
<rect x="665.500" y="334.500" width="14" height="14" fill="#ff6347" stroke="#000"/><path d="M668 337l9 9M677 337l-9 9" stroke="#333"/>
<g stroke="#c0c0c0" stroke-width="2"><rect x="704.500" y="268.500" width="66" height="18" fill="#ff0000"/><rect x="704.500" y="300.500" width="66" height="18" fill="#ff6347"/><rect x="704.500" y="332.500" width="66" height="18" fill="#008080"/></g>
<text x="767" y="282" text-anchor="end" style="font-size:13px">4199.25</text><text x="767" y="314" text-anchor="end" style="font-size:13px">4197.50</text><text x="767" y="346" text-anchor="end" style="font-size:13px">4196.25</text>
<path d="M697 309.500l7-5v10z" fill="#888"/>

<!-- right window -->
<rect x="779" y="73" width="587" height="24" fill="#f4f4f4"/>
<rect x="788" y="75" width="12" height="4" fill="#3a90dc"/><rect x="790.500" y="80.500" width="12" height="9" fill="#fff" stroke="#5a9ad8"/><rect x="790" y="80" width="13" height="3" fill="#3a90dc"/><path d="M792 88l3-3 2 1 3-3" stroke="#e55a20" fill="none"/>
<text x="806" y="87" lengthAdjust="spacingAndGlyphs" textLength="55" style="font-size:11.500px;fill:#6a7078">EPM21,M1</text>
<path d="M1281 84.500h9" stroke="#b0b0b0" stroke-width="2"/><rect x="1314.500" y="78.500" width="9" height="9" fill="none" stroke="#b0b0b0"/><path d="M1349 79l7 8M1356 79l-7 8" stroke="#b0b0b0" stroke-width="2"/>
<rect x="785" y="97" width="581" height="468" fill="#000"/>
<g class="tm"><text x="789" y="114" lengthAdjust="spacingAndGlyphs" textLength="58" style="font-size:12.500px">Минута  3</text></g>
<!-- volume profile -->
<g fill="#4a4a4a"><path d="M785 120h11v2h-11zM785 125h32v2h-32zM785 131h18v2h-18zM785 136h13v2h-13zM785 142h9v2h-9zM785 148h7v2h-7zM785 153h11v2h-11zM785 159h28v2h-28zM785 164h54v2h-54zM785 170h72v2h-72zM785 176h57v2h-57zM785 181h78v2h-78zM785 187h85v2h-85zM785 193h77v2h-77zM785 198h69v2h-69zM785 204h69v2h-69zM785 209h46v2h-46zM785 215h81v2h-81zM785 221h72v2h-72zM785 226h143v2h-143zM785 232h167v2h-167zM785 237h293v2h-293zM785 243h230v2h-230zM785 249h238v2h-238zM785 254h247v2h-247zM785 260h296v2h-296zM785 265h346v2h-346zM785 270h335v2h-335zM785 276h353v2h-353zM785 281h362v2h-362zM785 287h262v2h-262zM785 293h194v2h-194zM785 299h97v2h-97zM785 304h97v2h-97zM785 309h58v2h-58zM785 315h67v2h-67zM785 321h53v2h-53zM785 326h59v2h-59zM785 332h40v2h-40zM785 338h33v2h-33zM785 343h57v2h-57zM785 349h74v2h-74zM785 354h79v2h-79zM785 360h103v2h-103zM785 366h109v2h-109zM785 371h109v2h-109zM785 377h59v2h-59zM785 382h36v2h-36zM785 388h26v2h-26zM785 394h28v2h-28zM785 399h17v2h-17zM785 405h19v2h-19zM785 410h11v2h-11z"/></g>
<!-- levels -->
<rect x="831" y="209" width="381" height="2.500" fill="#d2b48c"/><rect x="844" y="326" width="368" height="2.500" fill="#d2b48c"/>
<rect x="785" y="270" width="427" height="3" fill="#7fc81e"/>
<path d="M785 266.500h510" stroke="#7888a0"/>
<!-- circles -->
<circle cx="820.700" cy="238" r="7.500" fill="#a8e4e0"/><circle cx="840.800" cy="250" r="5" fill="#e8a8a8"/><circle cx="867.500" cy="267" r="8.500" fill="#f0a898"/><circle cx="800" cy="277" r="5" fill="#f4f0ee"/><circle cx="949" cy="244" r="5.500" fill="#f4ecec"/><circle cx="963.500" cy="238" r="8" fill="#f4ecec"/><circle cx="983" cy="210" r="5.500" fill="#30c0c8"/><path d="M993 121h20v3a10 13 0 0 1-20 0z" fill="#d8f0e8"/><circle cx="1037.400" cy="244" r="10.500" fill="#c04040"/><circle cx="1071" cy="283" r="5.500" fill="#30c0c8"/><circle cx="1118.500" cy="299" r="5.500" fill="#d08088"/>
<!-- wicks -->
<path d="M793.500 265v25M800.500 255v27M806.500 272v34M813.500 243v34M820.500 222v40M826.500 210v30M833.500 210v40M840.500 233v29M847.500 233v29M853.500 233v11M860.500 222v16M867.500 222v55M874.500 260v35M881.500 277v29M887.500 283v34M894.500 287v30M901.500 288v23M908.500 295v22M914.500 293v18M928.500 277v11M935.500 277v34M941.500 255v28M948.500 238v17M955.500 222v22M962.500 216v34M968.500 222v16M976.500 233v17M982.500 200v45M989.500 180v25M995.500 165v40M1002.500 127v51M1009.500 132v34M1017.500 160v28M1022.500 160v39M1036.500 194v78M1043.500 233v39M1050.500 250v33M1057.500 267v16M1064.500 267v28M1070.500 277v18M1078.500 261v22M1084.500 260v17M1097.500 244v22M1105.500 255v33M1118.500 294v17M1125.500 272v39M1132.500 267v21M1138.500 261v22M1145.500 267v16M1152.500 267v16M1172.500 277v29M1179.500 277v29M1186.500 267v21M1192.500 261v11M1200.500 267v28M1206.500 261v16" stroke="#9a9a9a" fill="none"/>
<path d="M973 233h7M1014 166h7M1149 277h7" stroke="#9a9a9a"/>
<path d="M785.500 294h4v17h-4zM791.500 272h4v16h-4zM811.500 255h4v22h-4zM818.500 238h4v17h-4zM824.500 217h4v16h-4zM845.500 238h4v17h-4zM851.500 238h4v6h-4zM858.500 227h4v6h-4zM892.500 305h4v6h-4zM899.500 299h4v6h-4zM912.500 294h4v17h-4zM919.500 277h4v17h-4zM933.500 277h4v11h-4zM939.500 261h4v16h-4zM946.500 244h4v11h-4zM953.500 233h4v11h-4zM966.500 227h4v6h-4zM980.500 210h4v28h-4zM987.500 188h4v17h-4zM993.500 172h4v16h-4zM1000.500 127h4v39h-4zM1055.500 272h4v11h-4zM1068.500 277h4v6h-4zM1076.500 267h4v16h-4zM1088.500 255h4v22h-4zM1123.500 277h4v22h-4zM1136.500 267h4v16h-4zM1163.500 277h4v17h-4zM1177.500 283h4v11h-4zM1184.500 272h4v11h-4zM1190.500 267h4v5h-4zM1204.500 267h4v10h-4z" fill="#32cd32" stroke="#8c8c8c"/>
<path d="M797.500 272h4v5h-4zM804.500 272h4v5h-4zM831.500 217h4v27h-4zM838.500 244h4v6h-4zM865.500 233h4v33h-4zM872.500 266h4v17h-4zM879.500 283h4v5h-4zM885.500 288h4v23h-4zM906.500 305h4v6h-4zM926.500 277h4v11h-4zM960.500 227h4v11h-4zM1007.500 132h4v29h-4zM1020.500 160h4v34h-4zM1034.500 194h4v50h-4zM1041.500 250h4v11h-4zM1048.500 261h4v16h-4zM1062.500 272h4v16h-4zM1082.500 267h4v5h-4zM1095.500 250h4v16h-4zM1103.500 267h4v16h-4zM1109.500 283h4v16h-4zM1116.500 294h4v6h-4zM1130.500 272h4v5h-4zM1143.500 267h4v10h-4zM1157.500 277h4v17h-4zM1170.500 277h4v22h-4zM1198.500 267h4v16h-4z" fill="#e01010" stroke="#8c8c8c"/>
<!-- right axis -->
<path d="M1289.500 97V527M1289 105.500h14M1289 126.500h14M1289 149.500h14M1289 171.500h14M1289 193.500h14M1289 216.500h14M1289 238.500h14M1289 260.500h14M1289 282.500h14M1289 305.500h14M1289 327.500h14M1289 350.500h14M1289 372.500h14M1289 394.500h14M1289 417.500h14" stroke="#a8b8d0" fill="none"/>
<path d="M1289 115.500h6M1289 138.500h6M1289 160.500h6M1289 182.500h6M1289 205.500h6M1289 227.500h6M1289 249.500h6M1289 271.500h6M1289 294.500h6M1289 316.500h6M1289 339.500h6M1289 361.500h6M1289 383.500h6M1289 406.500h6" stroke="#667080" fill="none"/>
<g class="ax"><text x="1364" y="109">4205.00</text><text x="1364" y="130">4204.00</text><text x="1364" y="153">4203.00</text><text x="1364" y="175">4202.00</text><text x="1364" y="220">4200.00</text><text x="1364" y="242">4199.00</text><text x="1364" y="286">4197.00</text><text x="1364" y="309">4196.00</text><text x="1364" y="331">4195.00</text><text x="1364" y="354">4194.00</text><text x="1364" y="376">4193.00</text><text x="1364" y="398">4192.00</text><text x="1364" y="421">4191.00</text></g>
<text x="1266" y="284" text-anchor="end" style="font-size:12px;font-weight:bold;fill:#b4c6de">16:00:14</text><text x="1266" y="297" text-anchor="end" style="font-size:12px;font-weight:bold;fill:#b4c6de">02:46</text>
<path d="M1295 266.500l10-8h61v17h-61z" fill="#808080"/><text x="1364" y="271" text-anchor="end" style="font-size:13px;font-weight:bold">4197.75</text>
<path d="M785 188.500h518" stroke="#fff" stroke-dasharray="4 3"/><rect x="1305.500" y="180.500" width="62" height="16" fill="#808080" stroke="#e0e0e0"/><text x="1364" y="193" text-anchor="end" style="font-size:12.500px;fill:#e0e0e0">4201.25</text>
<path d="M785 435.500h581M785 527.500h581M785 547.500h581" stroke="#a8b8d0"/>
<use href="#tool" x="789" y="415"/>
<g class="inf"><text x="811" y="430" lengthAdjust="spacingAndGlyphs" textLength="63">O: 4199.50</text><text x="883" y="430" lengthAdjust="spacingAndGlyphs" textLength="63">H: 4200.00</text><text x="955" y="430" lengthAdjust="spacingAndGlyphs" textLength="60">L: 4198.50</text><text x="1024" y="430" lengthAdjust="spacingAndGlyphs" textLength="62">C: 4199.00</text></g>
<text x="791" y="453" lengthAdjust="spacingAndGlyphs" textLength="73" style="font-size:12.500px;fill:#a8b4c4">Volume 1237</text>
<!-- volume -->
<path d="M785 496h4v27h-4zM797 492h5v31h-5zM804 496h5v27h-5zM811 492h5v31h-5zM818 476h5v47h-5zM824 488h5v35h-5zM980 495h5v28h-5zM987 495h5v28h-5zM993 467h5v56h-5zM1000 440h5v83h-5zM1014 502h5v21h-5zM1054 502h5v21h-5zM1068 493h5v30h-5zM1075 509h5v14h-5zM1088 505h5v18h-5zM1095 508h5v15h-5zM1122 505h5v18h-5zM1135 509h5v14h-5zM1142 511h5v12h-5zM1149 511h5v12h-5zM1162 512h5v11h-5zM1169 510h5v13h-5zM1189 509h5v14h-5zM1203 509h5v14h-5z" fill="#00b0b0"/>
<path d="M831 495h5v28h-5zM838 491h5v32h-5zM865 466h5v57h-5zM872 493h5v30h-5zM946 495h5v28h-5zM960 464h5v59h-5zM1007 494h5v29h-5zM1020 511h5v12h-5zM1027 509h5v14h-5zM1034 443h5v80h-5zM1041 499h5v24h-5zM1048 505h5v18h-5zM1061 493h5v30h-5zM1081 507h5v16h-5zM1102 512h5v11h-5zM1108 505h5v18h-5zM1115 497h5v26h-5zM1129 504h5v19h-5zM1156 511h5v12h-5zM1176 506h5v17h-5zM1183 506h5v17h-5zM1196 513h5v10h-5z" fill="#a00000"/>
<path d="M965.500 97V540" stroke="#fff" stroke-dasharray="4 3"/>
<path d="M1289 509.500h12" stroke="#e0e0e0"/><rect x="1303.500" y="501.500" width="52" height="16" fill="#808080" stroke="#e8e8e8"/><text x="1352" y="514" text-anchor="end" style="font-size:12.500px;fill:#e0e0e0">293</text>
<rect x="960.500" y="530.500" width="65" height="15" fill="#808080" stroke="#e0e0e0"/><text x="1022" y="542" text-anchor="end" style="font-size:12.500px;fill:#e8e8e8">09:12:00</text>
<g class="tm"><text x="1015" y="562" lengthAdjust="spacingAndGlyphs" textLength="27">09:42</text><text x="1105" y="562" lengthAdjust="spacingAndGlyphs" textLength="26">10:21</text></g>
<rect x="1172.500" y="549.500" width="36" height="14" fill="none" stroke="#a8b8d0"/>
<text x="1238" y="563" lengthAdjust="spacingAndGlyphs" textLength="120" style="font-size:12.500px;fill:#a8b4c4">2021.05.26 11:00:00</text>
<g class="bt">
<rect class="on" x="857.500" y="102.500" width="14" height="14"/><path class="bl" d="M860 109.500h9M864.500 105v9"/>
<rect x="875.500" y="102.500" width="14" height="14"/><text x="882.500" y="114">H</text>
<rect x="893.500" y="102.500" width="14" height="14"/><path d="M896 109.500h9" class="bl" stroke-width="2"/>
<rect x="911.500" y="102.500" width="14" height="14"/><path d="M918.500 105v9" class="bl" stroke-width="2"/>
<rect class="on" x="929.500" y="102.500" width="14" height="14"/><path d="M933 114l7-9" class="bl" stroke-width="1.500"/>
<rect x="947.500" y="102.500" width="14" height="14"/><path d="M950 105.500h9M950 107.500h6M950 109.500h8M950 111.500h5M950 113.500h7" class="bl"/>
<rect x="965.500" y="102.500" width="14" height="14"/><path d="M968 105.500h9M968 108.500h9" class="bl"/><text x="974" y="115" style="font-size:9px;font-weight:bold">F</text>
<rect class="on" x="983.500" y="102.500" width="14" height="14"/><circle cx="990.500" cy="109.500" r="4.500" fill="#c8d4e0"/>
<rect x="1001.500" y="102.500" width="14" height="14"/><text x="1008.500" y="114">P</text>
<rect x="1019.500" y="102.500" width="14" height="14"/><text x="1025" y="113" style="font-size:11px">P</text><text x="1030" y="115" style="font-size:8px">h</text>
<rect x="1037.500" y="102.500" width="14" height="14"/><text x="1044.500" y="114">C</text>
<path d="M1055.500 101v16M1060.500 101v16" stroke="#b4c4d6"/><path d="M1057 109l3-3v6z" fill="#b4c4d6"/>
<rect x="1084.500" y="102.500" width="14" height="14"/><text x="1091.500" y="114">A</text>
<rect class="on" x="1102.500" y="102.500" width="14" height="14"/><path d="M1105 109.500h6M1111 106l3 3.500-3 3.500z" stroke="#d8e0e8" fill="#d8e0e8"/>
<rect class="on" x="1120.500" y="102.500" width="14" height="14"/><path d="M1124 105h7l-2.500 4.500 2.500 4.500h-7l2.500-4.500z" fill="#d8e0e8"/>
<rect x="1138.500" y="102.500" width="14" height="14"/><text x="1145.500" y="114">M</text>
</g>
<path d="M1204 98h11l-5.500 5z" fill="#8fa2ba"/>
<path d="M1365 97v468" stroke="#a8b8d0" opacity=".5"/>

<!-- tabs row -->
<rect y="565" width="1366" height="163" fill="#f0f0f0"/>
<path d="M0 567.500h1366" stroke="#000"/>
<rect x="4.500" y="567.500" width="83" height="17" fill="#fff" stroke="#000"/>
<text x="14" y="580" lengthAdjust="spacingAndGlyphs" textLength="62" style="font-size:11.500px">MESM21,M1</text>
<text x="100" y="581" lengthAdjust="spacingAndGlyphs" textLength="52" style="font-size:11.500px;fill:#707070">EPM21,M1</text>
<path d="M1332 572v8l-4-4zM1351 572v8l4-4z" fill="#9a9a9a"/>
<path d="M0 587.500h1366" stroke="#dcdcdc"/>
<!-- news panel -->
<rect x="16" y="590" width="1361" height="92" fill="#fff"/>
<path d="M16 589.500h1362" stroke="#a8a8a8"/><path d="M15.500 589v94" stroke="#a8a8a8"/>
<rect x="16" y="590" width="1350" height="22" fill="url(#hd)"/><path d="M16 612.500h1350" stroke="#d4d4d4"/><path d="M1221.500 590v22" stroke="#e0e0e0"/>
<text x="22" y="606" lengthAdjust="spacingAndGlyphs" textLength="25" style="font-size:11.500px">Тема</text>
<text x="985" y="606" style="font-size:11.500px" lengthAdjust="spacingAndGlyphs" textLength="34">егория</text>
<text x="1356" y="606" text-anchor="end" style="font-size:11.500px">Время</text>
<text x="7" y="598" class="ct" style="font-size:11px;font-weight:bold">×</text>
<rect x="2" y="603" width="13" height="99" fill="#c6d0dc"/>
<text transform="translate(12 700) rotate(-90)" lengthAdjust="spacingAndGlyphs" textLength="69" style="font-size:11.500px;fill:#8a8f96">Инструменты</text>
<path d="M16 682.500h1350" stroke="#000"/>
<g class="tab">
<text x="28" y="698" lengthAdjust="spacingAndGlyphs" textLength="49">Торговля</text><text x="97" y="698" lengthAdjust="spacingAndGlyphs" textLength="39">Активы</text><text x="156" y="698" lengthAdjust="spacingAndGlyphs" textLength="45">История</text><text x="286" y="698" lengthAdjust="spacingAndGlyphs" textLength="33">Почта</text><text x="346" y="698" lengthAdjust="spacingAndGlyphs" textLength="56">Календарь</text><text x="422" y="698" lengthAdjust="spacingAndGlyphs" textLength="54">Компания</text><text x="496" y="698">Алерты</text>
<path d="M87.500 685v14M146.500 685v14M336.500 685v14M412.500 685v14M486.500 685v14" stroke="#8a8a8a"/>
</g>
<text x="321" y="700" style="font-size:9px;font-weight:bold;fill:#e02020">7</text>
<rect x="211.500" y="682.500" width="64" height="17" fill="#fff" stroke="#000"/><path d="M212 682.500h63" stroke="#fff"/>
<path d="M211.500 682v17M275.500 682v17M211 699.500h65" stroke="#000"/>
<text x="221" y="698" lengthAdjust="spacingAndGlyphs" textLength="45" style="font-size:11.500px">Новости</text>
<!-- right tabs -->
<path d="M1049 688a3 3 0 0 1 6 0v2" fill="none" stroke="#7a7a40"/><rect x="1046" y="689" width="12" height="11" fill="#f7c400"/><path d="M1048 698l2-3 2 2 2-2 2 3z" fill="#2a5fb0"/>
<text x="1062" y="698" lengthAdjust="spacingAndGlyphs" textLength="40" style="font-size:11.500px">Маркет</text>
<rect x="1119" y="693" width="3" height="6" fill="#1fb01f"/><rect x="1124" y="691" width="3" height="7" fill="#1fb01f"/><path d="M1122 690a5 5 0 0 1 7 5M1120 688a8 8 0 0 1 11 8" fill="none" stroke="#3a8fdc" stroke-width="1.200"/>
<text x="1134" y="698" lengthAdjust="spacingAndGlyphs" textLength="46" style="font-size:11.500px">Сигналы</text>
<path d="M1195 692a3 3 0 0 1 3-5 5 5 0 0 1 8 1 3 3 0 0 1 2 4z" fill="#e8f4ff" stroke="#3a8fdc"/><rect x="1198" y="691" width="9" height="4" fill="#444e55"/><rect x="1198" y="696" width="9" height="4" fill="#444e55"/>
<text x="1212" y="698" lengthAdjust="spacingAndGlyphs" textLength="20" style="font-size:11.500px">VPS</text>
<rect x="1245.500" y="687.500" width="15" height="13" fill="#333" stroke="#2a7fc8"/><rect x="1245" y="687" width="16" height="3" fill="#3a90dc"/><path d="M1247 698l4-4 3 2 5-4" stroke="#8fd040" fill="none"/>
<text x="1263" y="698" lengthAdjust="spacingAndGlyphs" textLength="90" style="font-size:11.500px">Тестер стратегий</text>
<!-- status bar -->
<path d="M0 704.500h1366" stroke="#c4c4c4"/>
<text x="2" y="722" lengthAdjust="spacingAndGlyphs" textLength="173" style="font-size:11.500px">Для вызова справки нажмите F1</text>
<text x="985" y="722" lengthAdjust="spacingAndGlyphs" textLength="48" style="font-size:11.500px">H: 4201.25</text><text x="1052" y="722" lengthAdjust="spacingAndGlyphs" textLength="48" style="font-size:11.500px">L: 4201.00</text><text x="1118" y="722" lengthAdjust="spacingAndGlyphs" textLength="52" style="font-size:11.500px">C: 4201.00</text><text x="1187" y="722" lengthAdjust="spacingAndGlyphs" textLength="25" style="font-size:11.500px">V: 53</text><text x="1273" y="722" lengthAdjust="spacingAndGlyphs" textLength="55" style="font-size:11.500px">4330 / 4 Kb</text>
<path d="M1045.500 708v18M1112.500 708v18M1181.500 708v18M1247.500 708v18" stroke="#b0b0b0"/>
<rect x="1253" y="709" width="11" height="16" fill="#3a90dc" stroke="#1a5a9a"/><circle cx="1265" cy="721" r="4.500" fill="#3cb043" stroke="#fff"/>

<!-- taskbar -->
<rect y="728" width="1366" height="40" fill="url(#tb)"/>
<path d="M0 728.500h1366" stroke="#1c3660"/>
<circle cx="27" cy="748" r="18" fill="url(#orb)" stroke="#9ac0dc"/><path d="M18 742l8-2v7h-8z" fill="#e8502a"/><path d="M28 740l9-2v9h-9z" fill="#7cc020"/><path d="M18 749h8v7l-8-1z" fill="#2a8adc"/><path d="M28 749h9v9l-9-2z" fill="#f0b820"/>
<!-- excel -->
<rect x="73" y="732" width="28" height="28" rx="1" fill="#fff"/><rect x="87" y="740" width="14" height="20" fill="#e0f0e0" stroke="#6ca86c"/><path d="M88 744h12M88 748h12M88 752h12" stroke="#6ca86c"/><path d="M74 733h17l-3 10-4 7-10 5z" fill="#1f8a3c"/><text x="83" y="752" class="ct" style="font-size:18px;font-weight:bold;fill:#fff">X</text>
<!-- word -->
<rect x="136" y="733" width="28" height="27" fill="#fff" stroke="#c0d0e8"/><rect x="137" y="733" width="24" height="18" fill="#2a5fb8"/><text x="149" y="751" class="ct" style="font-size:20px;font-weight:bold;fill:#fff;font-family:'Liberation Serif',serif">W</text><path d="M150 755h12M155 758h8" stroke="#8aa4cc"/>
<!-- calc -->
<path d="M199 733l20-1 10 28-20 2z" fill="#a8aeb4" stroke="#777"/><path d="M204 736l12-1 2 5-12 1z" fill="#7a8a60"/><g fill="#4a5058"><path d="M207 745h3v3h-3zM212 745h3v3h-3zM217 744h3v3h-3zM209 750h3v3h-3zM214 750h3v3h-3zM219 749h3v3h-3zM211 755h3v3h-3zM216 755h3v3h-3zM221 754h3v3h-3z"/></g>
<!-- explorer -->
<path d="M259 737h12l2 2h17v24h-31z" fill="#f2d878" stroke="#c8a840"/><path d="M262 735h8v4h-8zM272 736h8v4h-8z" fill="#fff" stroke="#ccc"/><rect x="270" y="752" width="12" height="5" fill="#5aa8dc"/><path d="M266 762l4-10h12l4 10z" fill="#9ad0f0" stroke="#4a98cc"/><path d="M263 747l7 4M259 745h31" stroke="#fff" opacity=".6"/>
<!-- tiles -->
<rect x="308.500" y="729.500" width="57" height="40" rx="2" fill="#fff" fill-opacity=".09" stroke="#6f88a8"/>
<rect x="370.500" y="729.500" width="57" height="40" rx="2" fill="#fff" fill-opacity=".3" stroke="#a8bccc"/>
<rect x="432.500" y="729.500" width="57" height="40" rx="2" fill="#fff" fill-opacity=".09" stroke="#6f88a8"/>
<ellipse cx="337" cy="749" rx="13" ry="14" fill="#d41020"/><ellipse cx="337" cy="749" rx="5.500" ry="10" fill="#1c3a66"/>
<circle cx="399" cy="740" r="7" fill="#43a047"/><circle cx="390" cy="752" r="7" fill="#e0b020"/><circle cx="409" cy="752" r="7" fill="#2a6ab8"/><circle cx="399" cy="751" r="6.500" fill="#f4c63c" stroke="#fff"/><text x="399" y="755" class="ct" style="font-size:11px;font-weight:bold;fill:#5a3a00">5</text>
<rect x="445" y="733" width="32" height="30" rx="5" fill="#cfe6fa"/><path d="M451 747a14 14 0 0 1 20 0M454 751a9 9 0 0 1 14 0M457 755a5 5 0 0 1 8 0" fill="none" stroke="#3aa0e8" stroke-width="2"/><circle cx="461" cy="759" r="2" fill="#3aa0e8"/>
<!-- tray -->
<text x="1054" y="749" lengthAdjust="spacingAndGlyphs" textLength="15" style="font-size:11.500px;fill:#e6eef6">EN</text>
<path d="M1086 746l6-3 6 3v8l-6 6-6-6z" fill="#1f9c7a"/><path d="M1092 746v6M1089.500 750l2.500 3 2.500-3" stroke="#fff" fill="none"/>
<rect x="1109" y="742" width="15" height="15" rx="2" fill="#cfe6fa"/><path d="M1111 748a8 8 0 0 1 11 0M1113 751a5 5 0 0 1 7 0" fill="none" stroke="#3aa0e8" stroke-width="1.300"/><circle cx="1116.500" cy="754" r="1.200" fill="#3aa0e8"/>
<rect x="1134" y="741" width="8" height="9" fill="#aab0b6"/><rect x="1135" y="750" width="6" height="7" fill="#555"/><circle cx="1143" cy="754" r="4.500" fill="#3cb043"/><path d="M1141 754l2 2 3-4" stroke="#fff" fill="none"/>
<circle cx="1165" cy="750" r="8" fill="#6fb04a"/><circle cx="1166" cy="751" r="6" fill="#eee"/><text x="1166" y="755" class="ct" style="font-size:10px;fill:#5a3ab0;font-weight:bold">4</text>
<path d="M1181 741v17" stroke="#eee" stroke-width="1.500"/><path d="M1182 742h10v8h-10z" fill="#fff"/><circle cx="1191" cy="754" r="4.500" fill="#e03030"/><path d="M1189 752l4 4M1193 752l-4 4" stroke="#fff"/>
<path d="M1205 756h3v2h-3zM1209 753h3v5h-3zM1213 750h3v8h-3z" fill="#fff"/><path d="M1217 746h3v12h-3z" fill="#5a6f8c"/>
<path d="M1231 747h3l4-4v14l-4-4h-3z" fill="#fff"/><path d="M1241 746a5 5 0 0 1 0 8" stroke="#8aa0bc" fill="none"/>
<rect x="1254" y="744" width="10" height="11" rx="1" fill="#fff"/><path d="M1257 741v4M1262 741v4M1259 755v4M1262 746h4" stroke="#fff" stroke-width="1.500"/><rect x="1256" y="747" width="6" height="6" fill="#1c3660"/>
<text x="1313" y="745" class="ct" lengthAdjust="spacingAndGlyphs" textLength="28" style="font-size:13px;fill:#eef4fa">16:00</text>
<text x="1312" y="763" class="ct" lengthAdjust="spacingAndGlyphs" textLength="53" style="font-size:12px;fill:#eef4fa">26.05.2021</text>
<rect x="1352.500" y="729.500" width="13" height="38" fill="#2a4a74" stroke="#7690ae"/>

<!-- dialog -->
<g class="dg">
<rect x="520" y="497" width="465" height="271" fill="url(#gl)"/>
<path d="M520 497.500h465" stroke="#c4d0d8" opacity=".6"/>
<rect x="520" y="527" width="6" height="241" fill="#90a4b4"/><rect x="978" y="527" width="7" height="241" fill="#5f7f9a"/>
<rect x="526" y="527" width="452" height="241" fill="#f0f0f0"/>
<path d="M525.500 527h453v241" fill="none" stroke="#5a6670" opacity=".8"/><path d="M525.500 527v241" stroke="#5a6670" opacity=".8"/>
<text x="527" y="517" lengthAdjust="spacingAndGlyphs" textLength="105" style="font-size:12px;fill:#0a0a0a">MESM21, Тик  1000</text>
<rect x="931.500" y="500.500" width="47" height="15" rx="3" fill="#3a4850" fill-opacity=".6" stroke="#e8eef2"/><text x="955" y="513" class="ct" style="font-size:13px;font-weight:bold;fill:#fff">X</text>

<!-- buttons -->
<g stroke="#6b2c14"><rect x="532.500" y="533.500" width="83" height="34" fill="#ff7f50"/><rect x="627.500" y="533.500" width="49" height="19" fill="#ff7f50"/><rect x="689.500" y="533.500" width="64" height="19" fill="#ff7f50"/></g>
<rect x="627.500" y="563.500" width="49" height="23" fill="#ff0000" stroke="#5a0000"/><rect x="689.500" y="563.500" width="64" height="23" fill="#d3d3d3" stroke="#666"/>
<g stroke="#12305a"><rect x="532.500" y="583.500" width="83" height="34" fill="#1e90ff"/><rect x="627.500" y="597.500" width="49" height="19" fill="#1e90ff"/><rect x="689.500" y="597.500" width="64" height="19" fill="#1e90ff"/></g>
<rect x="689.500" y="628.500" width="64" height="18" fill="#cccccc" stroke="#777"/>
<text x="574" y="548" class="ct" lengthAdjust="spacingAndGlyphs" textLength="72">Best Sell Limit</text><text x="574" y="561" class="ct">4197.75</text>
<text x="573.500" y="598" class="ct" lengthAdjust="spacingAndGlyphs" textLength="72">Best Buy Limit</text><text x="573" y="611" class="ct">4197.50</text>
<text x="652" y="547" class="ct" lengthAdjust="spacingAndGlyphs" textLength="26" style="font-size:12px">SELL</text><text x="722" y="547" class="ct" lengthAdjust="spacingAndGlyphs" textLength="35" style="font-size:12px">Delete</text>
<text x="652" y="578" class="ct" lengthAdjust="spacingAndGlyphs" textLength="35" style="font-size:12px;font-weight:bold">CLOSE</text><text x="722" y="579" class="ct" lengthAdjust="spacingAndGlyphs" textLength="53" style="font-size:12px">Delete all</text>
<text x="652" y="611" class="ct" lengthAdjust="spacingAndGlyphs" textLength="23" style="font-size:12px">BUY</text><text x="722" y="611" class="ct" lengthAdjust="spacingAndGlyphs" textLength="35" style="font-size:12px">Delete</text>
<text x="722" y="642" class="ct" lengthAdjust="spacingAndGlyphs" textLength="41">Reverse</text>
<text x="533" y="641" lengthAdjust="spacingAndGlyphs" textLength="73">объем ордера</text>
<rect class="ed" x="620.500" y="628.500" width="56" height="19"/><text x="623" y="642">1</text><use href="#sp" x="662" y="629"/>
<use href="#ck" x="532" y="659"/><text x="549" y="668">SL</text>
<rect class="ed" x="574.500" y="658.500" width="64" height="19"/><text x="577" y="672">7</text><use href="#sp" x="624" y="659"/>
<use href="#ck" x="646" y="659"/><text x="663" y="668">TP</text>
<rect class="ed" x="689.500" y="658.500" width="64" height="19"/><text x="692" y="672">5</text><use href="#sp" x="739" y="659"/>

<!-- limit group -->
<rect class="grp" x="761.500" y="540.500" width="210" height="114.500" rx="3"/>
<rect x="766" y="534" width="90" height="12" fill="#f0f0f0"/><text x="769" y="544" lengthAdjust="spacingAndGlyphs" textLength="85" style="font-size:11.500px">Лимитный ордер</text>
<use href="#ck" x="767" y="550"/><text x="783" y="560" lengthAdjust="spacingAndGlyphs" textLength="162">отменяется, если цена ушла на</text>
<rect class="ed" x="767.500" y="567.500" width="55" height="19"/><text x="770" y="582">5</text><use href="#sp" x="808" y="568"/><text x="831" y="581" lengthAdjust="spacingAndGlyphs" textLength="29">тиков</text>
<use href="#cu" x="767" y="595"/><text x="783" y="604" lengthAdjust="spacingAndGlyphs" textLength="90">передвигается на</text>
<rect class="ed" x="883.500" y="589.500" width="41" height="19"/><text x="885" y="604">0</text><use href="#sp" x="910" y="590"/><text x="932" y="604" lengthAdjust="spacingAndGlyphs" textLength="29">тиков</text>
<text x="767" y="626" lengthAdjust="spacingAndGlyphs" textLength="93">если цена прошла</text>
<rect class="ed" x="869.500" y="611.500" width="46" height="19"/><text x="871" y="626">0</text><use href="#sp" x="901" y="612"/><text x="922" y="626" lengthAdjust="spacingAndGlyphs" textLength="38">тиков и</text>
<text x="767" y="646" lengthAdjust="spacingAndGlyphs" textLength="87">прошло не более</text>
<rect class="ed" x="869.500" y="633.500" width="57" height="19"/><text x="871" y="648">0</text><use href="#sp" x="912" y="634"/><text x="935" y="646" lengthAdjust="spacingAndGlyphs" textLength="21">сек.</text>
<use href="#ck" x="770" y="663"/><text x="786" y="672" lengthAdjust="spacingAndGlyphs" textLength="164">тейкпрофит лимитным ордером</text>

<!-- delta group -->
<rect class="grp" x="532.500" y="689.500" width="220" height="90" rx="3"/>
<rect x="538" y="683" width="83" height="12" fill="#f0f0f0"/><text x="541" y="693" lengthAdjust="spacingAndGlyphs" textLength="77" style="font-size:11.500px">Дельта/Объем</text>
<use href="#ru" x="545" y="710"/><text x="556" y="714" lengthAdjust="spacingAndGlyphs" textLength="42">покупка</text>
<use href="#cu" x="613" y="704"/><text x="629" y="714" lengthAdjust="spacingAndGlyphs" textLength="83" style="font-size:14px;font-weight:bold;fill:#006400">ВКЛЮЧИТЬ</text>
<use href="#rc" x="545" y="733"/><text x="556" y="737" lengthAdjust="spacingAndGlyphs" textLength="44">продажа</text>
<rect class="ed" x="612.500" y="724.500" width="55" height="19"/><text x="615" y="738" style="font-size:12px">10</text><use href="#sp" x="653" y="725"/><text x="671" y="737" lengthAdjust="spacingAndGlyphs" textLength="60">таймер, сек</text>
<use href="#ck" x="539" y="751"/><text x="556" y="761" lengthAdjust="spacingAndGlyphs" textLength="106">использовать линию</text>
<use href="#ck" x="680" y="751"/><text x="697" y="761" lengthAdjust="spacingAndGlyphs" textLength="31">лимит</text>

<!-- imbalance group -->
<rect class="grp" x="761.500" y="689.500" width="210" height="90" rx="3"/>
<rect x="766" y="683" width="58" height="12" fill="#f0f0f0"/><text x="769" y="693" lengthAdjust="spacingAndGlyphs" textLength="51" style="font-size:11.500px">Имбаланс</text>
<use href="#ru" x="773" y="707"/><text x="785" y="711" lengthAdjust="spacingAndGlyphs" textLength="42">покупка</text>
<use href="#cu" x="842" y="704"/><text x="859" y="713" lengthAdjust="spacingAndGlyphs" textLength="83" style="font-size:14px;font-weight:bold;fill:#006400">ВКЛЮЧИТЬ</text>
<use href="#rc" x="773" y="732"/><text x="785" y="737" lengthAdjust="spacingAndGlyphs" textLength="44">продажа</text>
<rect class="ed" x="841.500" y="723.500" width="56" height="19"/><text x="844" y="737" style="font-size:12px">11</text><use href="#sp" x="883" y="724"/><text x="902" y="737" lengthAdjust="spacingAndGlyphs" textLength="60">таймер, сек</text>
<use href="#ck" x="768" y="751"/><text x="785" y="761" lengthAdjust="spacingAndGlyphs" textLength="106">использовать линию</text>
<use href="#ck" x="911" y="751"/><text x="928" y="761" lengthAdjust="spacingAndGlyphs" textLength="31">лимит</text>
</g>
</svg>
</body></html>
